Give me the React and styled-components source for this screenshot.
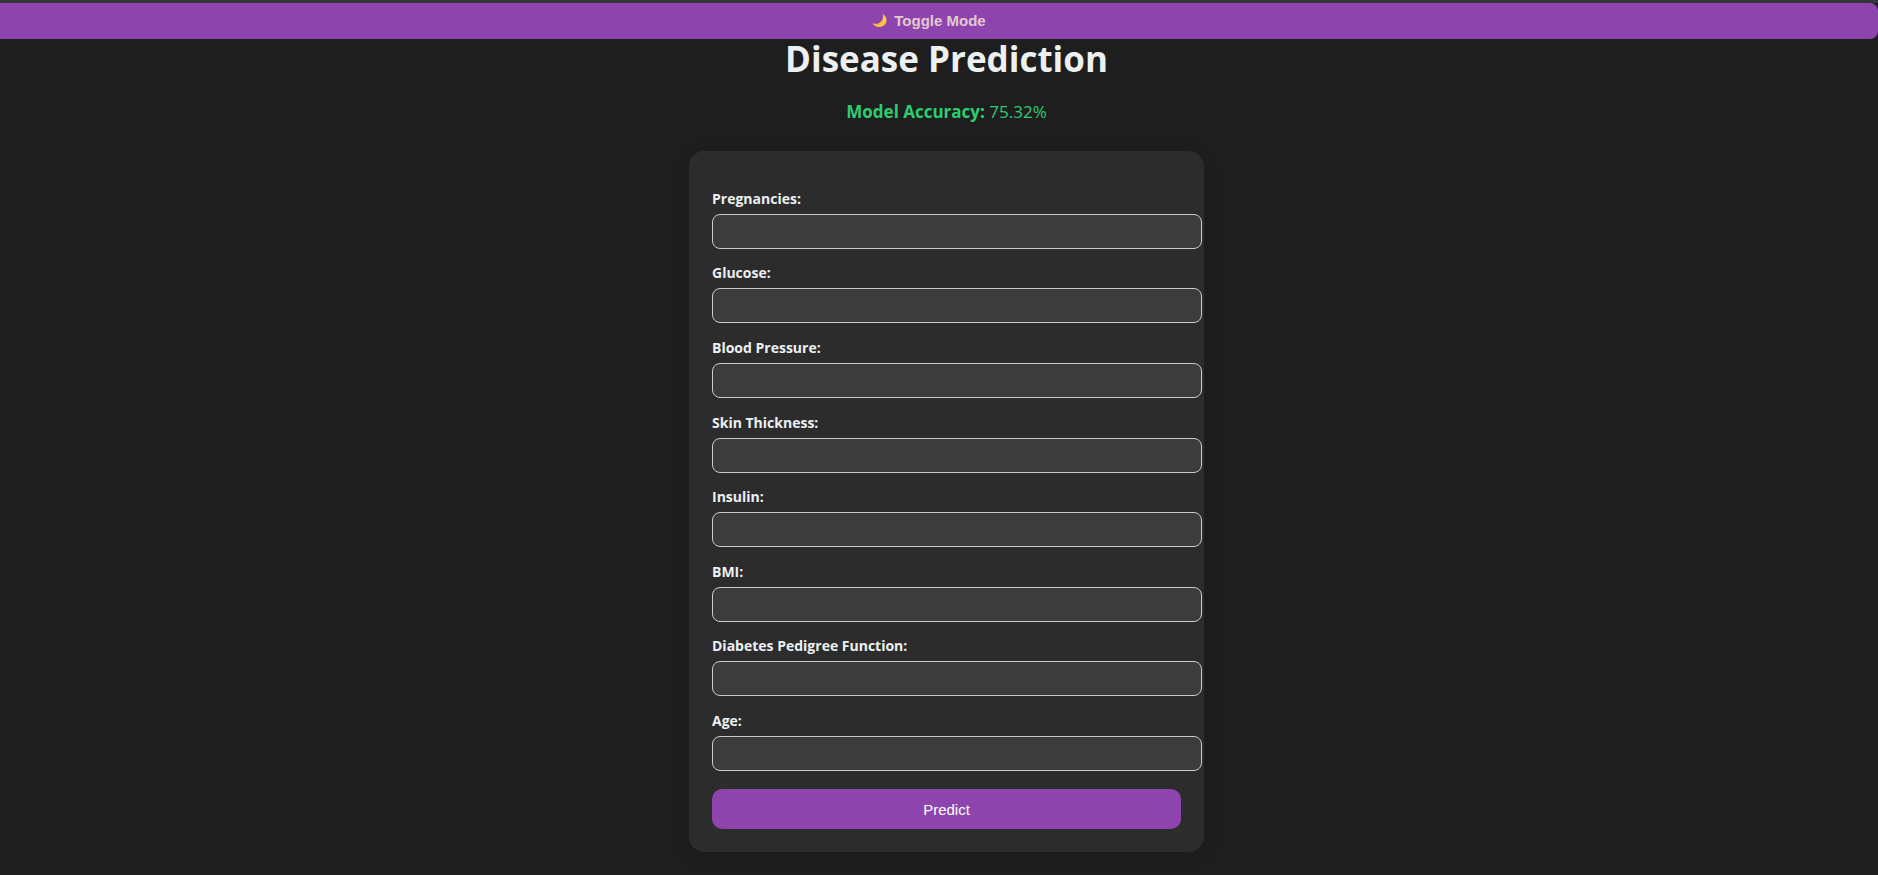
import React, { useId } from "react";
import styled, { createGlobalStyle } from "styled-components";

const GlobalStyle = createGlobalStyle`
  body {
    margin: 0;
    background: #1e1e1e;
    color: #ecf0f1;
    font-family: "Segoe UI", "Open Sans", "Noto Sans", sans-serif;
    overflow-x: hidden;
  }
`;

const TopEdge = styled.div`
  height: 3px;
  background: #353638;
`;

const ToggleBar = styled.header`
  display: flex;
  margin-left: -20px;
`;

const ToggleButton = styled.button`
  flex: 1;
  display: flex;
  align-items: center;
  justify-content: center;
  gap: 7px;
  height: 36px;
  padding: 0 0 2px;
  border: 0;
  border-radius: 8px;
  background: #8e44ad;
  color: #e2cad0;
  font: bold 15px "Liberation Sans", Arial, sans-serif;
  cursor: pointer;
`;

const Main = styled.main`
  display: flex;
  flex-direction: column;
  align-items: center;
  padding: 0 0 24px 15px;
`;

const Title = styled.h1`
  margin: 0;
  font-size: 35px;
  line-height: 40px;
  font-weight: 700;
`;

const Accuracy = styled.p`
  margin: 21px 0 27px;
  color: #2ecc71;
  font-size: 17px;
  line-height: 24px;
`;

const Card = styled.form`
  box-sizing: border-box;
  width: 100%;
  max-width: 515px;
  padding: 23px;
  border-radius: 15px;
  background: #2c2c2c;
  box-shadow: 0 4px 20px rgba(0, 0, 0, 0.1);
`;

const Fields = styled.div`
  display: grid;
  grid-auto-rows: 1fr;
  min-height: 597px;
  margin-right: -21px;
`;

const Field = styled.div`
  display: flex;
  flex-direction: column;
  justify-content: flex-end;
  gap: 5px;
`;

const Label = styled.label`
  font-size: 14px;
  line-height: 20px;
  font-weight: 700;
`;

const Input = styled.input`
  box-sizing: border-box;
  width: 100%;
  height: 35px;
  padding: 8px;
  border: 1px solid #cccccc;
  border-radius: 8px;
  background: #3c3c3c;
  color: #ecf0f1;
  font-size: 14px;
`;

const PredictButton = styled.button`
  display: block;
  width: 100%;
  height: 40px;
  margin-top: 18px;
  border: 0;
  border-radius: 10px;
  background: #8e44ad;
  color: #ffffff;
  font: 15px "Liberation Sans", Arial, sans-serif;
  cursor: pointer;
`;

const fields = [
  "Pregnancies",
  "Glucose",
  "Blood Pressure",
  "Skin Thickness",
  "Insulin",
  "BMI",
  "Diabetes Pedigree Function",
  "Age",
];

function Moon() {
  return (
    <svg width="15" height="15" viewBox="0 0 15 15" aria-hidden="true">
      <path
        d="M10.6 0.8 C16 4.2 15.7 10.8 10.6 13.2 C6.8 15 2.3 13.5 0.4 10.3 C4.1 11.4 7.4 10.7 9.4 8.2 C11.2 5.9 11.5 3.2 10.6 0.8Z"
        fill="#ffcb3d"
      />
      <path
        d="M1.5 11.2 C5.3 13 9.6 11.7 11.5 8.8"
        fill="none"
        stroke="#e9a62f"
        strokeWidth="0.6"
      />
    </svg>
  );
}

function NumberField({ label }) {
  const id = useId();
  return (
    <Field>
      <Label htmlFor={id}>{label}:</Label>
      <Input id={id} type="text" inputMode="decimal" />
    </Field>
  );
}

export default function App() {
  return (
    <>
      <GlobalStyle />
      <TopEdge />
      <ToggleBar>
        <ToggleButton type="button">
          <Moon />
          Toggle Mode
        </ToggleButton>
      </ToggleBar>
      <Main>
        <Title>Disease Prediction</Title>
        <Accuracy>
          <strong>Model Accuracy:</strong> 75.32%
        </Accuracy>
        <Card onSubmit={(event) => event.preventDefault()}>
          <Fields>
            {fields.map((label) => (
              <NumberField key={label} label={label} />
            ))}
          </Fields>
          <PredictButton type="submit">Predict</PredictButton>
        </Card>
      </Main>
    </>
  );
}
